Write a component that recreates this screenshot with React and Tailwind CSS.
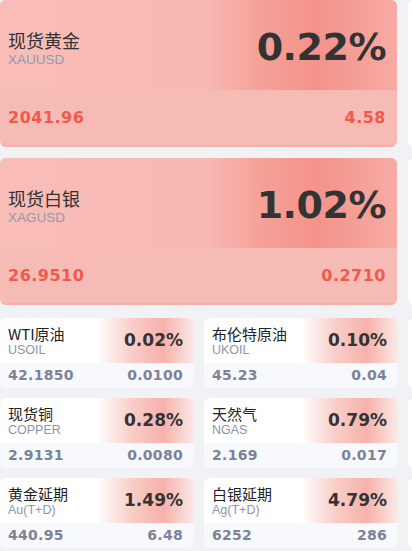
const bigCards = [
  { name: '现货黄金', code: 'XAUUSD', pct: '0.22%', price: '2041.96', change: '4.58' },
  { name: '现货白银', code: 'XAGUSD', pct: '1.02%', price: '26.9510', change: '0.2710' },
];

const smallRows = [
  [
    { name: 'WTI原油', code: 'USOIL', pct: '0.02%', price: '42.1850', change: '0.0100' },
    { name: '布伦特原油', code: 'UKOIL', pct: '0.10%', price: '45.23', change: '0.04' },
  ],
  [
    { name: '现货铜', code: 'COPPER', pct: '0.28%', price: '2.9131', change: '0.0080' },
    { name: '天然气', code: 'NGAS', pct: '0.79%', price: '2.169', change: '0.017' },
  ],
  [
    { name: '黄金延期', code: 'Au(T+D)', pct: '1.49%', price: '440.95', change: '6.48' },
    { name: '白银延期', code: 'Ag(T+D)', pct: '4.79%', price: '6252', change: '286' },
  ],
];

const cjk = "font-['Noto_Sans_CJK_SC',sans-serif]";
const latin = "font-['Liberation_Sans','Noto_Sans_CJK_SC',sans-serif]";
const num = "font-['DejaVu_Sans',sans-serif]";

function BigCard({ item }) {
  return (
    <div className="w-[397px] h-[147px] shrink-0 rounded-md overflow-hidden flex flex-col bg-[#f7bbb5]">
      <div className="h-[90px] flex items-center justify-between pl-2 pr-[11px] bg-[linear-gradient(to_right,#f9bdb8_0%,#f8b8b3_52%,#f5a197_66%,#f4938a_80%,#f7aba4_100%)]">
        <div className="flex flex-col pt-2">
          <span className={`${cjk} text-[18px] leading-[22px] text-[#333]`}>{item.name}</span>
          <span className={`${latin} text-[13.5px] leading-[18px] text-[#8f9ab0]`}>{item.code}</span>
        </div>
        <span className={`${num} text-[38px] font-bold tracking-[-0.5px] text-[#333] pt-1`}>{item.pct}</span>
      </div>
      <div className="flex-1 flex items-center justify-between px-2 pr-[11px] border-b-2 border-[#f4b1ab]">
        <span className={`${num} text-[16px] font-bold tracking-[0.5px] text-[#f05a4c]`}>{item.price}</span>
        <span className={`${num} text-[16px] font-bold tracking-[0.5px] text-[#f05a4c]`}>{item.change}</span>
      </div>
    </div>
  );
}

function SmallCard({ item }) {
  return (
    <div className="w-[194px] h-[70px] shrink-0 rounded-md overflow-hidden flex flex-col bg-[#f8f9fc]">
      <div className="h-[45px] flex items-center justify-between pl-2 pr-[11px] bg-[linear-gradient(to_right,#ffffff_50%,#f9cdc8_68%,#f6b1aa_84%,#fde9e7_100%)]">
        <div className="flex flex-col">
          <span className={`${cjk} text-[15px] leading-[18px] text-[#222]`}>{item.name}</span>
          <span className={`${latin} text-[12.5px] leading-[14px] text-[#8c94aa]`}>{item.code}</span>
        </div>
        <span className={`${num} text-[17px] font-bold text-[#333]`}>{item.pct}</span>
      </div>
      <div className="flex-1 flex items-center justify-between pl-2 pr-[11px]">
        <span className={`${num} text-[14px] font-bold tracking-[0.3px] text-[#7c8298]`}>{item.price}</span>
        <span className={`${num} text-[14px] font-bold tracking-[0.3px] text-[#7c8298]`}>{item.change}</span>
      </div>
    </div>
  );
}

export default function App() {
  return (
    <div className="w-[412px] h-[551px] overflow-hidden bg-[#f0f2f6]">
      <div className="flex flex-col gap-[11px]">
        {bigCards.map((c) => (
          <div key={c.code} className="flex gap-[11px]">
            <BigCard item={c} />
            <div className="w-[397px] h-[147px] shrink-0 rounded-md bg-white" />
          </div>
        ))}
      </div>
      <div className="flex flex-col gap-[10px] mt-[13px]">
        {smallRows.map((row, i) => (
          <div key={i} className="flex gap-[10px]">
            {row.map((c) => (
              <SmallCard key={c.code} item={c} />
            ))}
            <div className="w-[194px] h-[70px] shrink-0 rounded-md bg-white" />
          </div>
        ))}
      </div>
    </div>
  );
}
